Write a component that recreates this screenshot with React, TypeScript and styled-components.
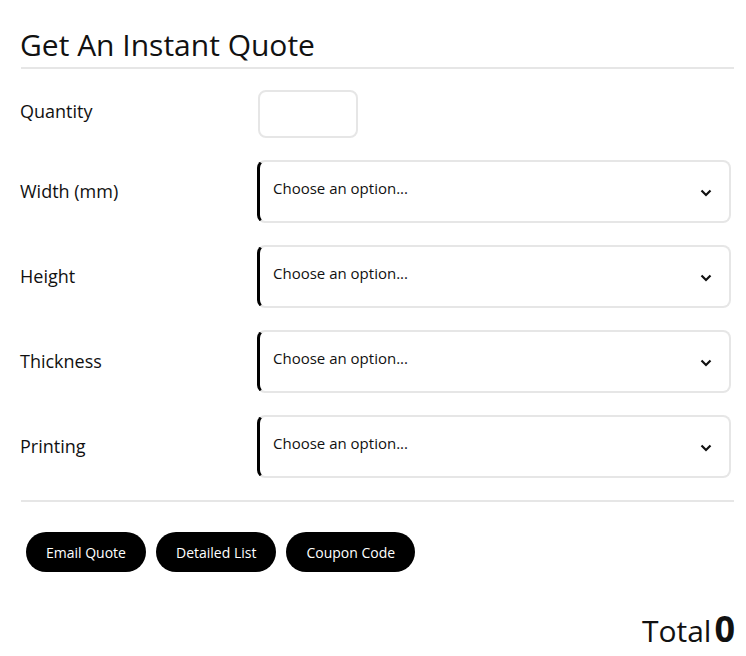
import React from "react";
import styled, { createGlobalStyle } from "styled-components";

const Global = createGlobalStyle`
  html, body { margin: 0; padding: 0; background: #fff; }
  body { font-family: "Open Sans", "Liberation Sans", sans-serif; color: #111; }
  * { box-sizing: border-box; }
`;

const Page = styled.div`
  padding: 27px 12px 0 20px;
`;

const Title = styled.h1`
  margin: 0;
  font-size: 30px;
  font-weight: 400;
  line-height: 36px;
  color: #111;
  padding-bottom: 4px;
`;

const Divider = styled.div<{ $top?: number }>`
  height: 2px;
  background: #e6e6e6;
  margin-left: 1px;
  margin-top: ${(p) => p.$top ?? 0}px;
`;

const Form = styled.div`
  display: flex;
  flex-direction: column;
  gap: 22px;
  margin-top: 21px;
`;

const Row = styled.div`
  display: grid;
  grid-template-columns: 237px 1fr;
  align-items: center;
`;

const Label = styled.label<{ $raise?: number }>`
  font-size: 18px;
  line-height: 24px;
  color: #111;
  margin-bottom: ${(p) => (p.$raise ?? 0) * 2}px;
`;

const QtyInput = styled.input`
  width: 100px;
  height: 48px;
  margin-left: 1px;
  border: 2px solid #e6e6e6;
  border-radius: 8px;
  outline: none;
  font: inherit;
  padding: 0 10px;
`;

const Select = styled.div`
  height: 63px;
  margin-right: 3px;
  display: flex;
  align-items: flex-start;
  justify-content: space-between;
  border: 2px solid #e6e6e6;
  border-left: 3px solid #000;
  border-radius: 8px;
  padding: 15px 17px 0 13px;
  font-size: 15px;
  line-height: 22px;
  color: #111;
`;

const Chevron = styled.svg`
  margin-top: 12px;
`;

const Buttons = styled.div`
  display: flex;
  gap: 10px;
  margin-top: 30px;
  padding-left: 6px;
`;

const PillButton = styled.button`
  height: 40px;
  padding: 0 20px;
  border: none;
  border-radius: 20px;
  background: #000;
  color: #fff;
  font-family: "Open Sans", "Liberation Sans", sans-serif;
  font-size: 14px;
`;

const TotalRow = styled.div`
  display: flex;
  justify-content: flex-end;
  align-items: baseline;
  gap: 3px;
  margin-top: 39px;
  margin-right: -1px;
`;

const TotalLabel = styled.span`
  font-size: 30px;
  line-height: 1;
`;

const TotalValue = styled.span`
  font-size: 36px;
  font-weight: 700;
  line-height: 1;
`;

const fields = ["Width (mm)", "Height", "Thickness", "Printing"];

export default function App() {
  return (
    <Page>
      <Global />
      <Title>Get An Instant Quote</Title>
      <Divider />
      <Form>
        <Row>
          <Label $raise={3}>Quantity</Label>
          <QtyInput type="text" />
        </Row>
        {fields.map((f) => (
          <Row key={f}>
            <Label $raise={0.5}>{f}</Label>
            <Select>
              <span>Choose an option...</span>
              <Chevron width="12" height="8" viewBox="0 0 12 8">
                <polyline points="1.5,1.5 6,6 10.5,1.5" fill="none" stroke="#111" strokeWidth="2.2" />
              </Chevron>
            </Select>
          </Row>
        ))}
      </Form>
      <Divider $top={22} />
      <Buttons>
        <PillButton>Email Quote</PillButton>
        <PillButton>Detailed List</PillButton>
        <PillButton>Coupon Code</PillButton>
      </Buttons>
      <TotalRow>
        <TotalLabel>Total</TotalLabel>
        <TotalValue>0</TotalValue>
      </TotalRow>
    </Page>
  );
}
